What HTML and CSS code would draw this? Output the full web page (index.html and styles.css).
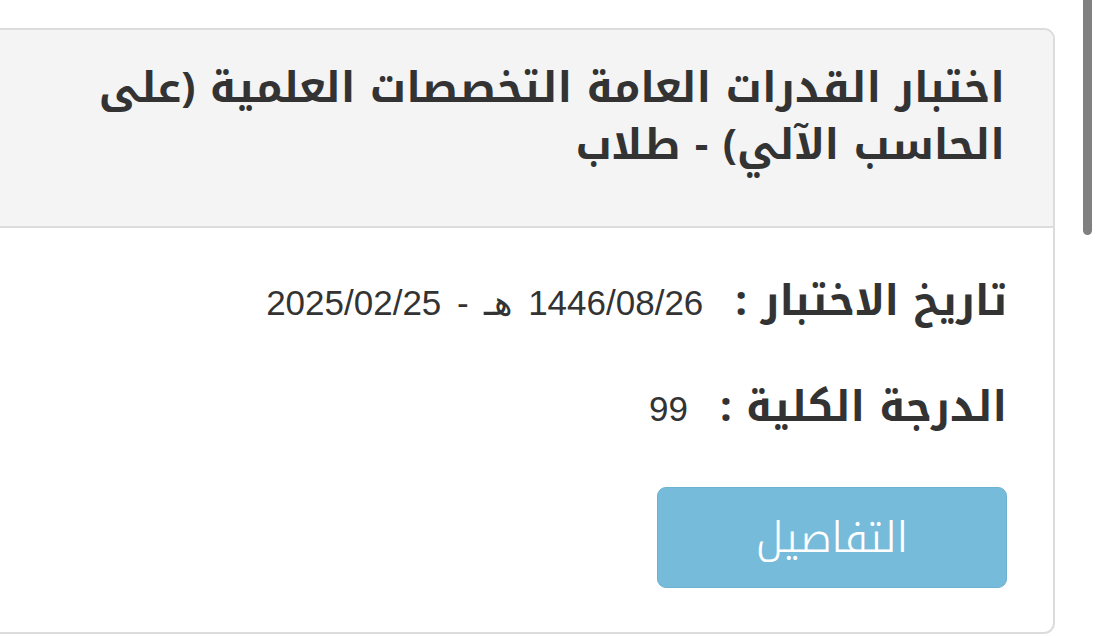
FILE: index.html
```html
<!DOCTYPE html>
<html lang="ar" dir="rtl">
<head>
    <meta charset="UTF-8">
    <meta name="viewport" content="width=device-width, initial-scale=1.0">
    <title>نتائج الاختبارات</title>
    <link rel="stylesheet" href="styles.css">
</head>
<body>
    <div class="page">
        <div class="result-card">
            <div class="card-header">
                <h2>اختبار القدرات العامة التخصصات العلمية (على الحاسب الآلي) - طلاب</h2>
            </div>
            <div class="card-body">
                <div class="info-row">
                    <span class="info-label">تاريخ الاختبار :</span>
                    <span class="info-value">1446/08/26 هـ - 2025/02/25</span>
                </div>
                <div class="info-row">
                    <span class="info-label">الدرجة الكلية :</span>
                    <span class="info-value">99</span>
                </div>
                <a class="details-btn" href="#">التفاصيل</a>
            </div>
        </div>
    </div>
    <div class="scroll-thumb"></div>
</body>
</html>
```

FILE: styles.css
```css
html, body {
    margin: 0;
    padding: 0;
    background-color: white;
    overflow: hidden;
}
body {
    font-family: "Noto Kufi Arabic", "Noto Sans Arabic", "DejaVu Sans", sans-serif;
    color: #333;
}
.page {
    padding-top: 28px;
    padding-right: 45px;
    margin-left: -20px;
}
.result-card {
    border: 2px solid #dcdcdc;
    border-radius: 11px;
    overflow: hidden;
    background-color: white;
}
.card-header {
    background-color: #f4f4f4;
    border-bottom: 2px solid #dcdcdc;
    padding: 30px 48px 52px 40px;
}
.card-header h2 {
    margin: 0;
    font-size: 42px;
    line-height: 57px;
    font-weight: bold;
    color: #333;
}
.card-body {
    padding: 34px 46px 44px 60px;
}
.info-row {
    display: flex;
    align-items: baseline;
    gap: 32px;
    height: 52px;
    margin-bottom: 54px;
}
.info-row:nth-child(2) {
    margin-bottom: 67px;
}
.info-label {
    font-size: 41.5px;
    font-weight: bold;
}
.info-value {
    font-family: "Liberation Sans", Arial, sans-serif;
    font-size: 35px;
    word-spacing: 6px;
    color: #333;
}
.details-btn {
    display: flex;
    align-items: center;
    justify-content: center;
    width: 350px;
    height: 101px;
    box-sizing: border-box;
    background-color: #76bbda;
    border: 1px solid #6cb2d2;
    border-radius: 9px;
    color: white;
    font-size: 42px;
    font-weight: 300;
    text-decoration: none;
}
.scroll-thumb {
    position: fixed;
    top: 0;
    right: 8px;
    width: 9px;
    height: 235px;
    background-color: #808080;
    border-radius: 0 0 5px 5px;
}
```
